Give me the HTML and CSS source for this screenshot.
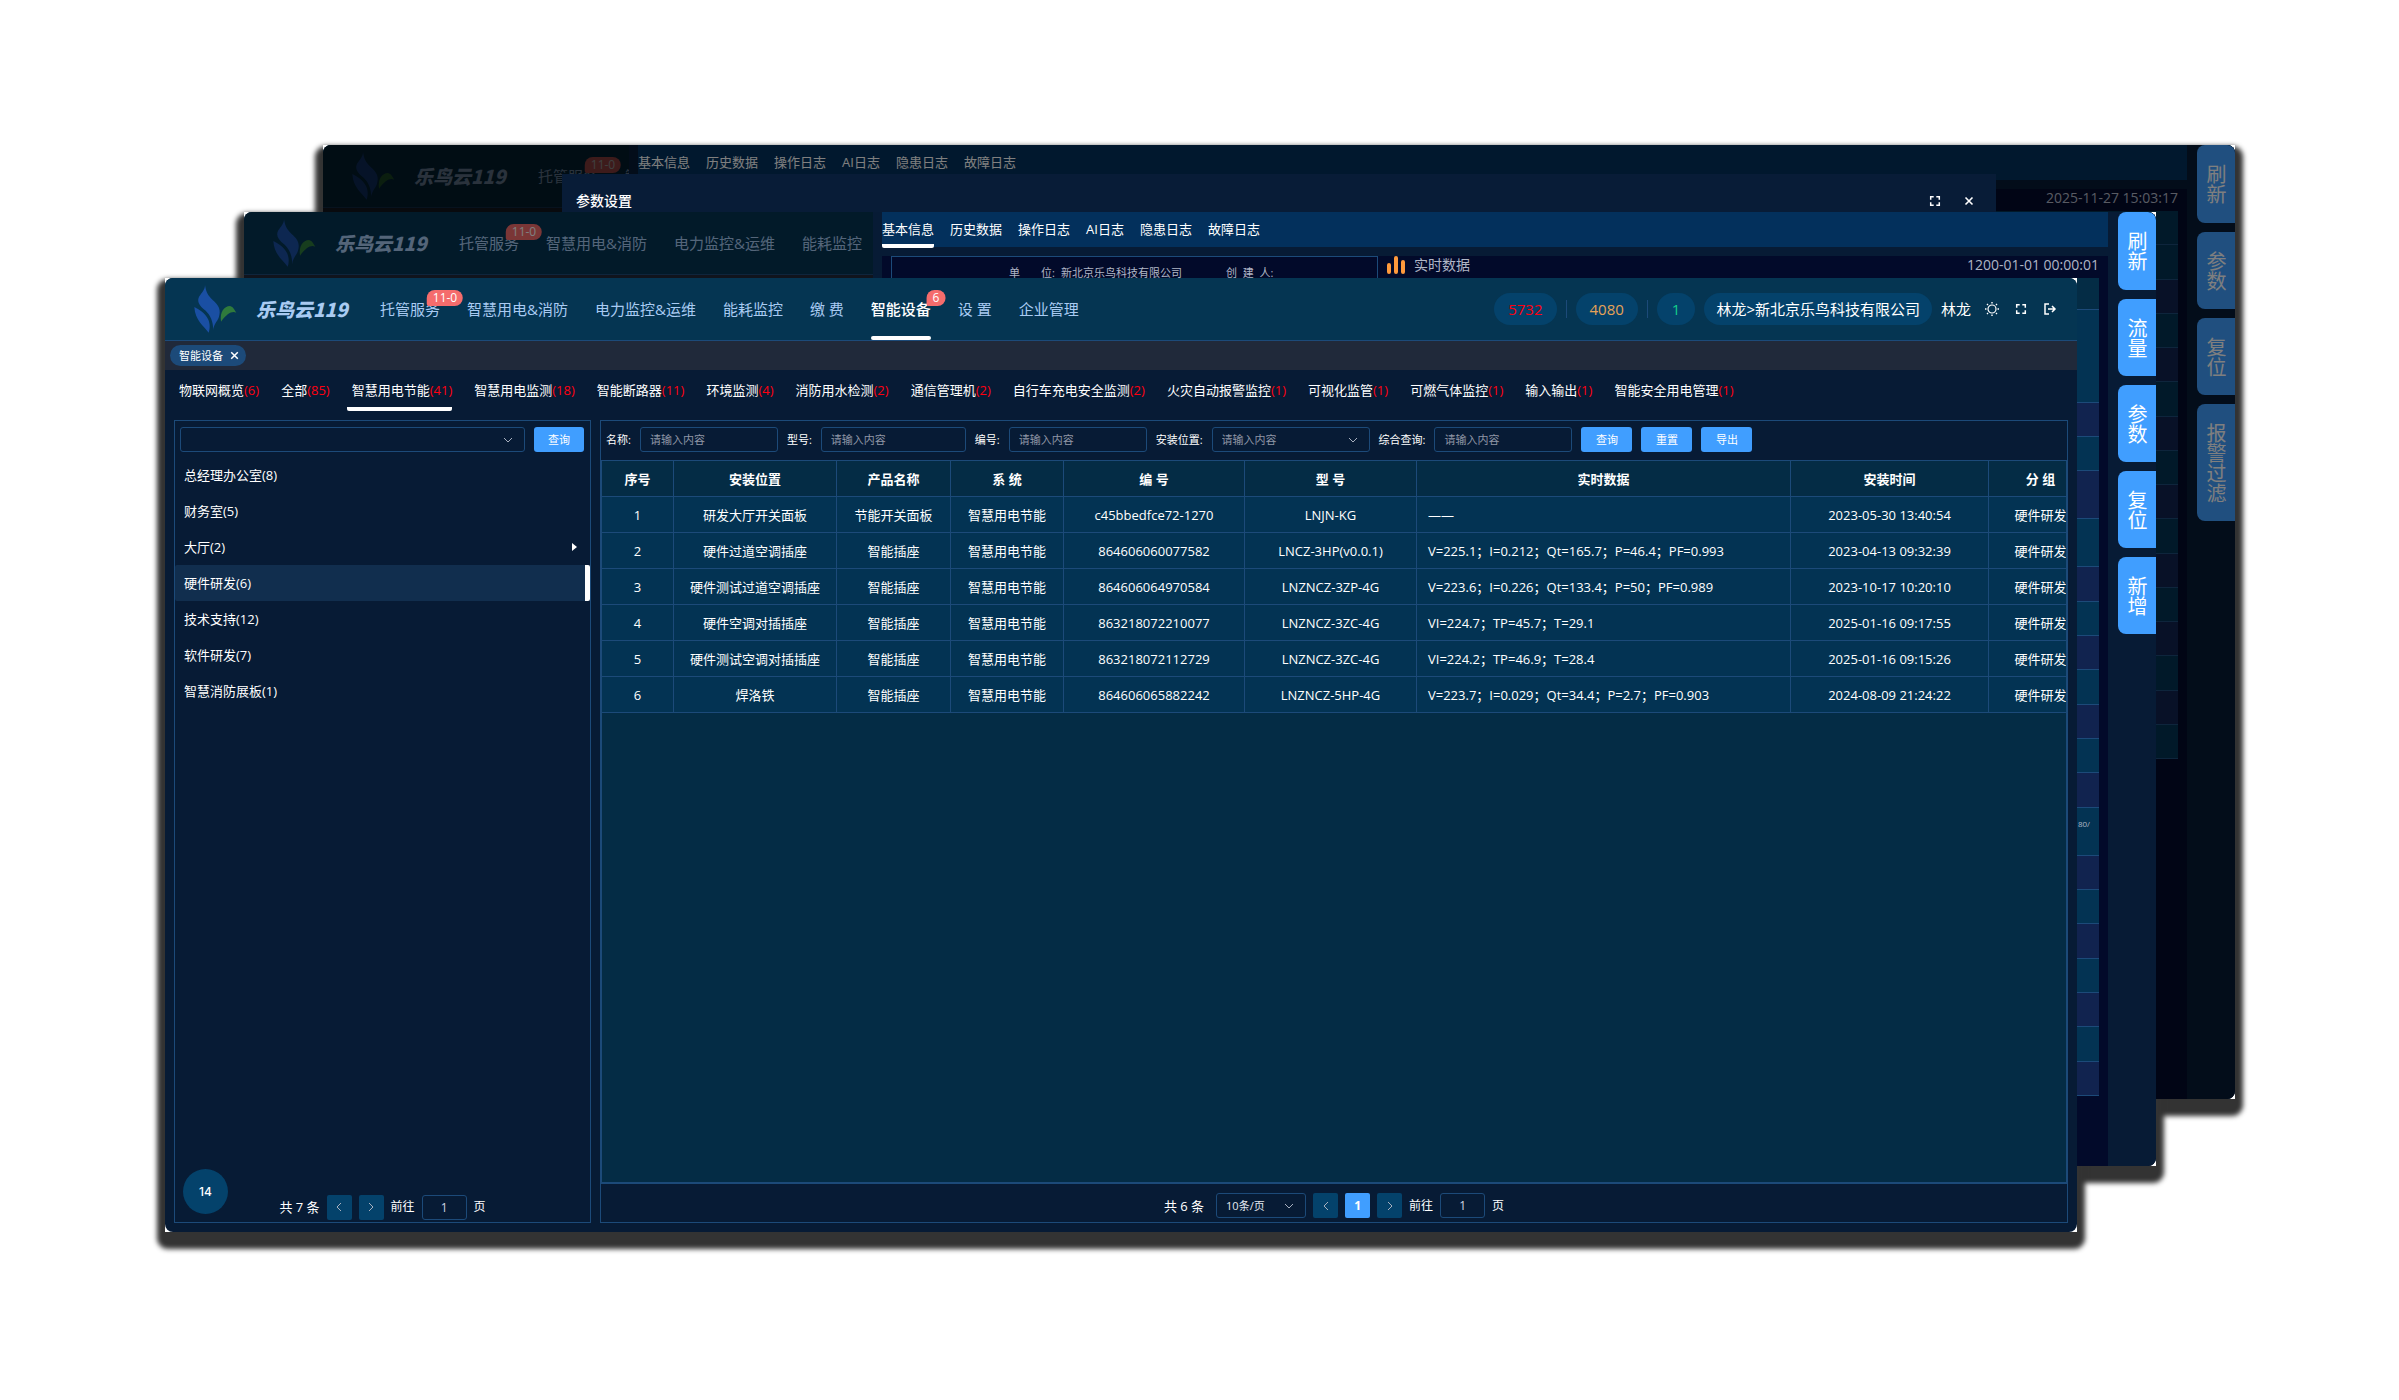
FILE: index.html
```html
<!DOCTYPE html>
<html lang="zh-CN">
<head>
<meta charset="utf-8">
<title>乐鸟云119</title>
<link rel="stylesheet" href="styles.css">
</head>
<body>
<svg class="defs" width="0" height="0" aria-hidden="true">
  <defs>
    <symbol id="logo" viewBox="0 0 129 144">
      <path fill="#1a4fa3" d="M33 0C36 20 41 31 56 45C75 61 82 76 74 98C69 110 58 120 58 136C57 108 50 92 35 77C14 62 8 48 16 34C24 22 33 14 33 0Z"/>
      <path fill="#1a4fa3" d="M1 66C15 74 32 82 42 102C49 117 48 132 44 143C30 124 3 106 1 66Z"/>
      <path fill="#2f7a3c" d="M81 110C77 80 90 64 108 63C118 65 122 76 127 83C114 77 100 85 81 110Z"/>
    </symbol>
    <symbol id="chevron" viewBox="0 0 12 12"><path fill="none" stroke="currentColor" d="M2 4L6 8L10 4"/></symbol>
    <symbol id="prev" viewBox="0 0 12 12"><path fill="none" stroke="currentColor" d="M8 2L4 6L8 10"/></symbol>
    <symbol id="next" viewBox="0 0 12 12"><path fill="none" stroke="currentColor" d="M4 2L8 6L4 10"/></symbol>
    <symbol id="full" viewBox="0 0 16 16"><path fill="none" stroke="currentColor" stroke-width="1.500" d="M6.700 3.700H3.700V6.700M9.300 3.700H12.300V6.700M3.700 9.300V12.300H6.700M12.300 9.300V12.300H9.300"/></symbol>
    <symbol id="close" viewBox="0 0 16 16"><path fill="none" stroke="currentColor" stroke-width="1.600" d="M4.500 4.500L11.500 11.500M11.500 4.500L4.500 11.500"/></symbol>
    <symbol id="sun" viewBox="0 0 16 16">
      <circle cx="8" cy="8" r="4" fill="none" stroke="currentColor" stroke-width="1.200"/>
      <path stroke="currentColor" stroke-width="1.400" d="M8 1V2.500M8 13.500V15M1 8H2.500M13.500 8H15M3 3L4 4M12 12L13 13M3 13L4 12M12 4L13 3"/>
    </symbol>
    <symbol id="exit" viewBox="0 0 16 16"><path fill="none" stroke="currentColor" stroke-width="1.500" d="M7 3H3V13H7M6 8H13M10 5L13 8L10 11"/></symbol>
    <symbol id="bars" viewBox="0 0 18 18"><path stroke="#ff9a3c" stroke-width="4" stroke-linecap="round" d="M2 9V16M9 2V16M16 6V16"/></symbol>
  </defs>
</svg>

<main class="desktop">

  <section class="window window-alarm">
    <div class="screen">
      <header class="topbar">
        <svg class="logo"><use href="#logo"/></svg>
        <span class="brand">乐鸟云119</span>
        <nav class="nav"><a href="#">托管服务<span class="badge">11-0</span></a><a href="#">智慧用电&amp;消防</a></nav>
      </header>
      <div class="tagbar"></div>
      <div class="shade"></div>
      <div class="drawer drawer-wide">
        <div class="drawer-main">
          <nav class="detail-tabs"><a href="#">基本信息</a><a href="#">历史数据</a><a href="#">操作日志</a><a href="#">AI日志</a><a href="#">隐患日志</a><a href="#">故障日志</a></nav>
          <div class="detail">
            <div class="readings">
              <div class="readings-head"><time>2025-11-27 15:03:17</time></div>
              <ul class="strip strip-even">
                <li></li><li></li><li class="alt"></li><li></li><li class="alt"></li><li></li><li class="alt"></li><li></li><li class="alt"></li><li></li><li class="alt"></li><li></li><li class="alt"></li><li></li><li class="alt"></li><li></li>
              </ul>
            </div>
          </div>
        </div>
        <div class="rail"><button>刷新</button><button>参数</button><button>复位</button><button class="tall">报警过滤</button></div>
      </div>
      <div class="shade"></div>
      <div class="modal">
        <h2>参数设置</h2>
        <button aria-label="全屏"><svg class="icon"><use href="#full"/></svg></button>
        <button aria-label="关闭"><svg class="icon"><use href="#close"/></svg></button>
      </div>
    </div>
  </section>

  <section class="window window-detail">
    <div class="screen">
      <header class="topbar">
        <svg class="logo"><use href="#logo"/></svg>
        <span class="brand">乐鸟云119</span>
        <nav class="nav"><a href="#">托管服务<span class="badge">11-0</span></a><a href="#">智慧用电&amp;消防</a><a href="#">电力监控&amp;运维</a><a href="#">能耗监控</a></nav>
      </header>
      <div class="tagbar"></div>
      <div class="shade"></div>
      <div class="drawer drawer-narrow">
        <div class="drawer-main">
          <nav class="detail-tabs"><a href="#" class="active">基本信息</a><a href="#">历史数据</a><a href="#">操作日志</a><a href="#">AI日志</a><a href="#">隐患日志</a><a href="#">故障日志</a></nav>
          <div class="detail">
            <div class="profile"><span class="unit"><span>单</span><span>位:</span></span><span>新北京乐鸟科技有限公司</span><span class="creator">创 &nbsp;建 &nbsp;人:</span></div>
            <div class="readings">
              <div class="readings-head"><svg class="bars"><use href="#bars"/></svg><h3>实时数据</h3><time>1200-01-01 00:00:01</time></div>
              <ul class="strip strip-mixed">
                <li class="head"></li><li class="x2"></li><li class="alt"></li><li></li><li class="alt x1"></li><li class="x1"></li><li class="alt"></li><li></li><li class="alt"></li><li></li><li class="alt"></li><li></li><li class="alt"></li><li class="x1">80/</li><li class="alt"></li><li></li><li class="alt"></li><li></li><li class="alt"></li><li></li><li class="alt"></li>
              </ul>
            </div>
          </div>
        </div>
        <div class="rail"><button>刷新</button><button>流量</button><button>参数</button><button>复位</button><button>新增</button></div>
      </div>
    </div>
  </section>

  <section class="window window-main">
    <div class="screen">
      <header class="topbar">
        <svg class="logo"><use href="#logo"/></svg>
        <span class="brand">乐鸟云119</span>
        <nav class="nav">
          <a href="#">托管服务<span class="badge">11-0</span></a><a href="#">智慧用电&amp;消防</a><a href="#">电力监控&amp;运维</a><a href="#">能耗监控</a><a href="#">缴 费</a><a href="#" class="active">智能设备<span class="badge">6</span></a><a href="#">设 置</a><a href="#">企业管理</a>
        </nav>
        <div class="status">
          <span class="pill red">5732</span><i class="sep"></i><span class="pill orange">4080</span><i class="sep"></i><span class="pill green">1</span>
          <span class="pill company">林龙&gt;新北京乐鸟科技有限公司</span>
          <span class="user">林龙</span>
          <button aria-label="主题"><svg class="icon"><use href="#sun"/></svg></button>
          <button aria-label="全屏"><svg class="icon"><use href="#full"/></svg></button>
          <button aria-label="退出"><svg class="icon"><use href="#exit"/></svg></button>
        </div>
      </header>
      <div class="tagbar"><span class="tag">智能设备<button aria-label="关闭标签"><svg><use href="#close"/></svg></button></span></div>
      <nav class="systems">
        <a href="#">物联网概览<em>(6)</em></a><a href="#">全部<em>(85)</em></a><a href="#" class="active">智慧用电节能<em>(41)</em></a><a href="#">智慧用电监测<em>(18)</em></a><a href="#">智能断路器<em>(11)</em></a><a href="#">环境监测<em>(4)</em></a><a href="#">消防用水检测<em>(2)</em></a><a href="#">通信管理机<em>(2)</em></a><a href="#">自行车充电安全监测<em>(2)</em></a><a href="#">火灾自动报警监控<em>(1)</em></a><a href="#">可视化监管<em>(1)</em></a><a href="#">可燃气体监控<em>(1)</em></a><a href="#">输入输出<em>(1)</em></a><a href="#">智能安全用电管理<em>(1)</em></a>
      </nav>
      <div class="workspace">
        <aside class="panel groups">
          <form class="group-search">
            <span class="select grow"><select aria-label="分组"><option></option></select><svg><use href="#chevron"/></svg></span>
            <button type="button" class="btn">查询</button>
          </form>
          <ul class="group-list">
            <li><a href="#">总经理办公室(8)</a></li>
            <li><a href="#">财务室(5)</a></li>
            <li class="parent"><a href="#">大厅(2)</a></li>
            <li class="active"><a href="#">硬件研发(6)</a></li>
            <li><a href="#">技术支持(12)</a></li>
            <li><a href="#">软件研发(7)</a></li>
            <li><a href="#">智慧消防展板(1)</a></li>
          </ul>
          <div class="pager">
            <span class="total">共 7 条</span>
            <button aria-label="上一页"><svg><use href="#prev"/></svg></button>
            <button aria-label="下一页"><svg><use href="#next"/></svg></button>
            <label for="gp">前往</label><input id="gp" value="1"><span>页</span>
          </div>
          <button class="bubble">14</button>
        </aside>

        <section class="panel devices">
          <form class="filters">
            <label for="f1">名称:</label><input id="f1" class="w1" placeholder="请输入内容">
            <label for="f2">型号:</label><input id="f2" class="w2" placeholder="请输入内容">
            <label for="f3">编号:</label><input id="f3" class="w1" placeholder="请输入内容">
            <label for="f4">安装位置:</label><span class="select w3"><select id="f4"><option>请输入内容</option></select><svg><use href="#chevron"/></svg></span>
            <label for="f5">综合查询:</label><input id="f5" class="w1" placeholder="请输入内容">
            <button type="button" class="btn">查询</button><button type="button" class="btn">重置</button><button type="button" class="btn">导出</button>
          </form>
          <div class="table-wrap">
            <table>
              <colgroup><col class="c-no"><col class="c-place"><col class="c-product"><col class="c-system"><col class="c-code"><col class="c-model"><col><col class="c-time"><col class="c-group"></colgroup>
              <thead><tr><th>序号</th><th>安装位置</th><th>产品名称</th><th>系 统</th><th>编 号</th><th>型 号</th><th>实时数据</th><th>安装时间</th><th>分 组</th></tr></thead>
              <tbody>
                <tr><td>1</td><td>研发大厅开关面板</td><td>节能开关面板</td><td>智慧用电节能</td><td>c45bbedfce72-1270</td><td>LNJN-KG</td><td class="live">——</td><td>2023-05-30 13:40:54</td><td>硬件研发</td></tr>
                <tr><td>2</td><td>硬件过道空调插座</td><td>智能插座</td><td>智慧用电节能</td><td>864606060077582</td><td>LNCZ-3HP(v0.0.1)</td><td class="live">V=225.1；I=0.212；Qt=165.7；P=46.4；PF=0.993</td><td>2023-04-13 09:32:39</td><td>硬件研发</td></tr>
                <tr><td>3</td><td>硬件测试过道空调插座</td><td>智能插座</td><td>智慧用电节能</td><td>864606064970584</td><td>LNZNCZ-3ZP-4G</td><td class="live">V=223.6；I=0.226；Qt=133.4；P=50；PF=0.989</td><td>2023-10-17 10:20:10</td><td>硬件研发</td></tr>
                <tr><td>4</td><td>硬件空调对插插座</td><td>智能插座</td><td>智慧用电节能</td><td>863218072210077</td><td>LNZNCZ-3ZC-4G</td><td class="live">VI=224.7；TP=45.7；T=29.1</td><td>2025-01-16 09:17:55</td><td>硬件研发</td></tr>
                <tr><td>5</td><td>硬件测试空调对插插座</td><td>智能插座</td><td>智慧用电节能</td><td>863218072112729</td><td>LNZNCZ-3ZC-4G</td><td class="live">VI=224.2；TP=46.9；T=28.4</td><td>2025-01-16 09:15:26</td><td>硬件研发</td></tr>
                <tr><td>6</td><td>焊洛铁</td><td>智能插座</td><td>智慧用电节能</td><td>864606065882242</td><td>LNZNCZ-5HP-4G</td><td class="live">V=223.7；I=0.029；Qt=34.4；P=2.7；PF=0.903</td><td>2024-08-09 21:24:22</td><td>硬件研发</td></tr>
              </tbody>
            </table>
          </div>
          <div class="pager">
            <span class="total">共 6 条</span>
            <span class="select size"><select aria-label="每页条数"><option>10条/页</option></select><svg><use href="#chevron"/></svg></span>
            <button aria-label="上一页"><svg><use href="#prev"/></svg></button>
            <button class="current">1</button>
            <button aria-label="下一页"><svg><use href="#next"/></svg></button>
            <label for="dp">前往</label><input id="dp" value="1"><span>页</span>
          </div>
        </section>
      </div>
    </div>
  </section>
</main>
</body>
</html>
```
FILE: styles.css
```css
:root {
  --line: #1c4a79;
  --navy: #071b35;
  --blue: #409eff;
}

* { box-sizing: border-box; }

body {
  margin: 0;
  background: #fff;
  color: #fff;
  font: 13px/20px "Open Sans", "Noto Sans CJK SC", sans-serif;
}

button, input, select {
  margin: 0;
  padding: 0;
  border: 0;
  background: none;
  color: inherit;
  font: inherit;
}

a { color: inherit; text-decoration: none; }
ul { margin: 0; padding: 0; list-style: none; }
h2, h3 { margin: 0; font-size: 14px; font-weight: 400; }
em, i { font-style: normal; }
.defs { position: absolute; }

/* Stacked windows on the desktop */
.desktop {
  position: relative;
  isolation: isolate;
  display: flex;
  min-height: 100vh;
  padding: 278px 322px 168px 165px;
}

.window { background: #fff; }

.window::before {
  content: "";
  position: absolute;
  z-index: -1;
  inset: 0;
  border-radius: 4px;
  box-shadow: 0 9px 5px 8px #333;
}

.window-alarm { position: absolute; inset: 145px 164px 301px 323px; }
.window-detail { position: absolute; inset: 212px 243px 234px 244px; }
.window-main { position: relative; display: flex; flex: 1; min-width: 0; }

.screen {
  position: relative;
  display: flex;
  flex-direction: column;
  flex: 1;
  min-width: 0;
  height: 100%;
  overflow: hidden;
  border-radius: 8px;
  background: var(--navy);
}

.window-main .screen { height: auto; }

.shade { position: absolute; inset: 0; background: rgba(0, 0, 0, .5); }

/* Top bar */
.topbar {
  display: flex;
  align-items: center;
  height: 63px;
  padding: 0 19px 0 29px;
  border-bottom: 1px solid var(--line);
  background: #053552;
  font-size: 15px;
  white-space: nowrap;
}

.logo { width: 43px; height: 48px; margin-right: 19px; }

.brand {
  width: 92px;
  margin-right: 32px;
  color: #a9cbf2;
  font-family: "Noto Sans CJK SC", sans-serif;
  font-size: 19px;
  font-weight: 900;
  font-style: italic;
}

.nav { display: flex; align-self: stretch; gap: 27px; color: #a9cbf2; }
.nav a { position: relative; display: flex; align-items: center; }
.nav .active { color: #fff; font-weight: 500; }

.nav .active::after {
  content: "";
  position: absolute;
  inset: auto 0 0;
  height: 4px;
  border-radius: 2px;
  background: #fff;
}

.badge {
  position: absolute;
  top: 12px;
  left: calc(100% + 5px);
  min-width: 18px;
  padding: 0 6px;
  border-radius: 8px 8px 8px 2px;
  background: #f56c6c;
  color: #fff;
  font-size: 12px;
  font-weight: 400;
  line-height: 16px;
  transform: translateX(-50%);
}

.status { display: flex; align-items: center; gap: 9px; margin-left: auto; }
.pill { padding: 0 14px; border-radius: 16px; background: #04426b; line-height: 32px; }
.company { padding: 0 12px; }
.red { color: #ff0010; }
.orange { color: #e6a257; }
.green { padding: 0 15px; color: #13ce8b; }
.sep { width: 1px; height: 18px; background: var(--line); }
.status button { display: flex; margin-left: 4px; }
.icon { width: 16px; height: 16px; }

.tagbar { display: flex; align-items: center; height: 29px; padding: 0 5px; background: #20293a; }

.tag {
  display: flex;
  align-items: center;
  gap: 4px;
  height: 21px;
  padding: 0 4px 0 9px;
  border-radius: 11px;
  background: var(--line);
  font-size: 11px;
}

.tag button { display: flex; }
.tag svg { width: 15px; height: 15px; }

/* System tabs */
.systems { display: flex; gap: 17px; height: 50px; padding-left: 9px; white-space: nowrap; }
.systems a { height: 41px; padding: 10px 0 0 5px; border-radius: 2px; }
.systems .active { border-bottom: 4px solid #fff; }
.systems em { color: #ff0010; }

/* Panels */
.workspace { display: flex; flex: 1; gap: 9px; min-height: 0; padding: 0 9px 9px; }
.panel { display: flex; flex-direction: column; border: 1px solid var(--line); }
.groups { position: relative; flex: 0 0 417px; }
.devices { flex: 1; min-width: 0; }

.group-search, .filters { display: flex; align-items: center; gap: 9px; padding: 6px 6px 5px 5px; font-size: 11px; }
.filters { padding-bottom: 8px; white-space: nowrap; }

input, .select {
  height: 25px;
  border: 1px solid var(--line);
  border-radius: 3px;
  color: #cfd6e2;
}

input { min-width: 0; padding: 0 9px; }
input::placeholder { color: #8f96a5; opacity: 1; }
.select { position: relative; display: flex; }
.select select { flex: 1; min-width: 0; padding: 0 9px; appearance: none; color: #8f96a5; }

.select svg {
  position: absolute;
  top: 6px;
  right: 10px;
  width: 12px;
  height: 12px;
  color: #a8b0bf;
  pointer-events: none;
}

.grow { flex: 1; }
.w1 { width: 138px; }
.w2 { width: 145px; }
.w3 { width: 158px; }
.btn { width: 51px; height: 25px; border-radius: 3px; background: var(--blue); }
.group-search .btn { width: 50px; }

.group-list { flex: 1; }
.group-list li { position: relative; height: 36px; }
.group-list a { display: block; padding: 8px 9px; }
.group-list .active { border-right: 5px solid #fff; border-radius: 2px; background: #112e4e; }

.parent::after {
  content: "";
  position: absolute;
  top: 14px;
  right: 13px;
  border: 4px solid transparent;
  border-left: 5px solid #fff;
  border-right: 0;
}

.pager { display: flex; align-items: center; justify-content: center; gap: 7px; height: 38px; padding-top: 5px; font-size: 12px; }
.groups .pager { height: 32px; padding-top: 2px; }
.total { font-size: 13px; }

.pager button {
  display: flex;
  align-items: center;
  justify-content: center;
  width: 25px;
  height: 25px;
  border-radius: 2px;
  background: #04426b;
}

.pager button svg { width: 12px; height: 12px; color: #a8b0bf; }
.pager .current { background: var(--blue); font-weight: 700; }
.pager input { width: 45px; text-align: center; }
.size { width: 90px; margin-left: 5px; font-size: 11px; }
.size select { color: #e3e8f0; }

.bubble {
  position: absolute;
  bottom: 8px;
  left: 8px;
  width: 45px;
  height: 45px;
  border-radius: 50%;
  background: #04426b;
  font: 500 12px "Inter", sans-serif;
}

/* Device table */
.table-wrap { flex: 1; overflow: hidden; border: 1px solid var(--line); border-width: 1px 1px 2px; background: #042c45; }
table { width: calc(100% + 27px); table-layout: fixed; border-collapse: separate; border-spacing: 0; }

th, td {
  height: 36px;
  padding: 0;
  border: solid var(--line);
  border-width: 0 1px 1px 0;
  text-align: center;
  white-space: nowrap;
}

th { font-weight: 700; }
td { background: #033353; }
.live { padding-left: 11px; text-align: left; }
.c-no { width: 72px; }
.c-place { width: 163px; }
.c-product { width: 114px; }
.c-system { width: 113px; }
.c-code { width: 181px; }
.c-model { width: 172px; }
.c-time { width: 198px; }
.c-group { width: 104px; }

/* Detail drawers */
.drawer {
  position: absolute;
  inset: 0 0 0 auto;
  display: flex;
  gap: 10px;
  padding-left: 9px;
  background: var(--navy);
}

.drawer-wide { left: 306px; }
.drawer-narrow { left: 629px; }
.drawer-main { display: flex; flex: 1; flex-direction: column; gap: 9px; min-width: 0; }
.detail-tabs { display: flex; gap: 16px; height: 35px; background: #03305c; }
.detail-tabs a { padding-top: 7px; }
.detail-tabs .active { height: 36px; border-bottom: 4px solid #fff; border-radius: 2px; }
.detail { display: flex; flex: 1; padding: 0 9px; background: #020a2a; color: #b0b6c6; }

.profile {
  display: flex;
  flex: 0 0 487px;
  align-items: flex-start;
  gap: 6px;
  padding: 6px 0 0 117px;
  border: 1px solid var(--line);
  font-size: 11px;
}

.unit { display: flex; justify-content: space-between; width: 46px; }
.creator { margin-left: 38px; }
.readings { flex: 1; }
.readings-head { display: flex; align-items: flex-start; height: 22px; padding-left: 9px; font-size: 14px; line-height: 18px; }
.readings-head time { margin-left: auto; }
.bars { width: 18px; height: 18px; margin-right: 9px; }
.strip { display: flex; flex-direction: column; }
.strip-mixed { height: 818px; }
.strip-even { height: 548px; }
.strip li { flex: 34 0 0; border-bottom: 1px solid var(--line); background: #033353; }
.strip .alt { background: #11234f; }
.strip .x1 { flex-grow: 48; }
.strip .x2 { flex-grow: 93; }
.strip .head { flex-grow: 32; background: #042c45; }
.strip-mixed li { padding-right: 9px; font-size: 8px; line-height: 32px; text-align: right; }

.rail { display: flex; flex-direction: column; align-items: stretch; gap: 9px; width: 38px; }

.rail button {
  display: flex;
  align-items: center;
  justify-content: center;
  height: 77px;
  border-radius: 8px 0 0 8px;
  background: var(--blue);
  font-family: "Noto Sans CJK SC", sans-serif;
  font-size: 20px;
  line-height: 20px;
  writing-mode: vertical-rl;
}

.rail .tall { height: 117px; }
.window .rail button:first-child { height: 78px; border-top-right-radius: 8px; }

/* Parameter dialog */
.modal {
  position: absolute;
  inset: 29px 239px;
  display: flex;
  align-items: flex-start;
  gap: 18px;
  padding: 17px 19px 0 14px;
  background: #081c37;
}

.modal h2 { margin-right: auto; font-weight: 500; }
.modal button { display: flex; padding-top: 2px; }
```
